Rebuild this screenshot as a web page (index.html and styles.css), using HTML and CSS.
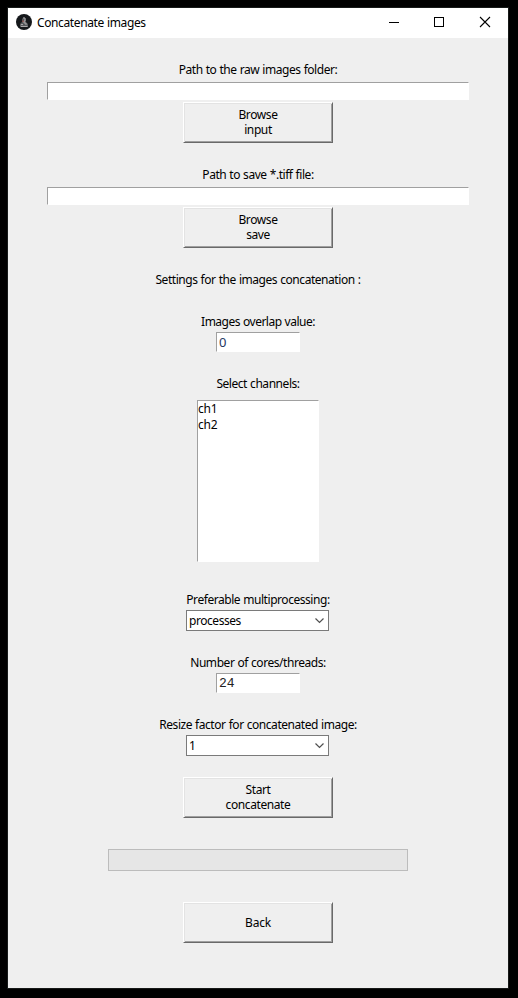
FILE: index.html
```
<!DOCTYPE html>
<html lang="en">
<head>
<meta charset="utf-8">
<title>Concatenate images</title>
<link rel="stylesheet" href="styles.css">
</head>
<body>
<main class="window">
  <header class="titlebar">
    <svg class="app-icon" width="16" height="16" viewBox="0 0 16 16">
      <circle cx="8" cy="8" r="8" fill="#15181b"/>
      <path d="M4 13v-3l2-2V5l2-2 2 2v3l2 2v3z" fill="#56585b"/>
      <path d="M7 4h2v3H8v2h2v2M5 10.500h2M5 12.500h6.500" fill="none" stroke="#aaa8a9"/>
      <path d="M7 6.500v1.500" stroke="#b0443e"/>
    </svg>
    <h1 class="title">Concatenate images</h1>
    <div class="controls">
      <svg width="46" height="30" viewBox="0 0 46 30"><path d="M19 14.500h10" stroke="#000"/></svg>
      <svg width="45" height="30" viewBox="0 0 45 30"><rect x="18.500" y="9.500" width="9" height="9" fill="none" stroke="#000"/></svg>
      <svg width="47" height="30" viewBox="0 0 47 30"><path d="M19 9l10 10M29 9L19 19" stroke="#000" stroke-width="1.100"/></svg>
    </div>
  </header>
  <section class="content">
    <div class="group">
      <div class="label">Path to the raw images folder:</div>
      <div class="entry wide"></div>
      <div class="button"><span>Browse</span><span>input</span></div>
    </div>
    <div class="group">
      <div class="label">Path to save *.tiff file:</div>
      <div class="entry wide"></div>
      <div class="button"><span>Browse</span><span>save</span></div>
    </div>
    <div class="label heading">Settings for the images concatenation :</div>
    <div class="group">
      <div class="label tight">Images overlap value:</div>
      <div class="entry small zero">0</div>
    </div>
    <div class="group channels">
      <div class="label">Select channels:</div>
      <div class="listbox"><div>ch1</div><div>ch2</div></div>
    </div>
    <div class="group">
      <div class="label">Preferable multiprocessing:</div>
      <div class="combo"><span>processes</span><svg width="9" height="6" viewBox="0 0 9 6"><path d="M.5.5l4 4 4-4" fill="none" stroke="#505050" stroke-width="1.200"/></svg></div>
    </div>
    <div class="group">
      <div class="label">Number of cores/threads:</div>
      <div class="entry small mono">24</div>
    </div>
    <div class="group resize">
      <div class="label">Resize factor for concatenated image:</div>
      <div class="combo"><span>1</span><svg width="9" height="6" viewBox="0 0 9 6"><path d="M.5.5l4 4 4-4" fill="none" stroke="#505050" stroke-width="1.200"/></svg></div>
    </div>
    <div class="button"><span>Start</span><span>concatenate</span></div>
    <div class="progress"></div>
    <div class="button single"><span>Back</span></div>
  </section>
</main>
</body>
</html>
```
FILE: styles.css
```
* { box-sizing: border-box; }
body {
  margin: 0;
  padding: 7px;
  height: 998px;
  background: #000;
  color: #000;
  font: 12px/16px "Noto Sans", sans-serif;
  letter-spacing: -0.45px;
  word-spacing: 0.4px;
}
.window {
  width: 502px;
  height: 982px;
  border: 1px solid #171a19;
  background: #efefef;
}
.titlebar {
  display: flex;
  align-items: center;
  height: 30px;
  padding-left: 8px;
  background: #fff;
}
.app-icon { margin-bottom: 2px; }
.title { flex: 1; margin: 0 0 0 5px; font-size: 12px; font-weight: 400; letter-spacing: -0.38px; }
.controls { display: flex; }
.content {
  display: flex;
  flex-direction: column;
  align-items: center;
  padding-top: 24px;
}
.group {
  display: flex;
  flex-direction: column;
  align-items: center;
  margin-bottom: 24px;
}
.label { height: 16px; white-space: nowrap; }
.tight { letter-spacing: -0.5px; }
.entry {
  border: 1px solid #fff;
  border-top-color: #a0a0a0;
  border-left-color: #a0a0a0;
  background: #fff;
}
.wide { width: 422px; height: 18px; margin: 4px 0 2px; }
.small { width: 84px; height: 20px; margin-top: 2px; padding-left: 2px; line-height: 18px; }
.zero { color: #26385f; font-size: 13px; }
.mono { color: #222; font: 13px/20px "Liberation Mono", monospace; letter-spacing: 0; }
.button {
  display: flex;
  flex-direction: column;
  align-items: center;
  justify-content: center;
  width: 150px;
  height: 41px;
  padding-bottom: 2px;
  border: 1px solid;
  border-color: #fff #696969 #696969 #fff;
  box-shadow: inset 1px 1px #e3e3e3, inset -1px -1px #a0a0a0;
  line-height: 15px;
  letter-spacing: -0.4px;
}
.single { padding-bottom: 0; letter-spacing: -0.2px; }
.heading { margin: 0 0 26px; }
.channels { margin-bottom: 30px; }
.listbox {
  width: 122px;
  height: 162px;
  margin-top: 8px;
  border: 1px solid #fff;
  border-top-color: #a0a0a0;
  border-left-color: #a0a0a0;
  background: #fff;
  letter-spacing: -0.2px;
}
.combo {
  display: flex;
  align-items: center;
  justify-content: space-between;
  width: 143px;
  height: 21px;
  margin: 2px 1px 0 0;
  padding: 0 4px 0 2px;
  border: 1px solid #7a7a7a;
  background: #fff;
}
.resize { margin-bottom: 21px; }
.progress {
  width: 300px;
  height: 22px;
  margin: 31px 0;
  border: 1px solid #bcbcbc;
  background: #e6e6e6;
}
```
